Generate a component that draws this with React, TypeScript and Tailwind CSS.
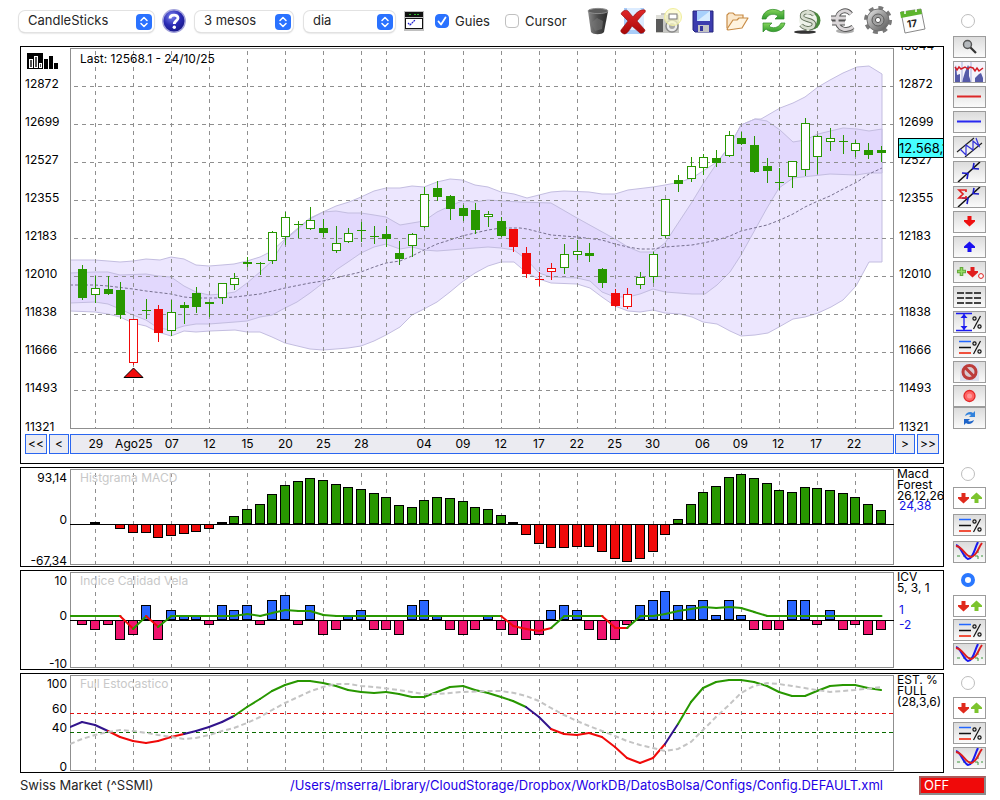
import { useState } from "react";
import type { ReactNode } from "react";

const COUNT = 64;
const X = (i: number) => Math.round(82.25 + i * 12.675);
const GRID = [1, 4, 7, 10, 13, 16, 19, 22, 24, 27, 30, 33, 36, 39, 42, 45, 46, 49, 52, 55, 58, 61];
const DATES: [number, string][] = [
  [1, "29"], [4, "Ago25"], [7, "07"], [10, "12"], [13, "15"], [16, "20"], [19, "25"], [22, "28"],
  [27, "04"], [30, "09"], [33, "12"], [36, "17"], [39, "22"], [42, "25"], [45, "30"], [49, "06"],
  [52, "09"], [55, "12"], [58, "17"], [61, "22"],
];

const GREEN = "#289700";
const RED = "#f00a0a";

// kind: G filled green, g hollow green, R filled red, r hollow red
type Candle = [string, number, number, number, number];
const CANDLES: Candle[] = [
  ["G", 265, 269, 297, 299], ["g", 276, 288, 294, 302], ["G", 276, 289, 293, 294], ["G", 282, 290, 314, 318],
  ["r", 319, 319, 362, 364], ["G", 299, 310, 310, 318], ["R", 305, 309, 332, 341], ["g", 300, 312, 330, 335],
  ["G", 302, 305, 307, 323], ["G", 287, 293, 306, 312], ["G", 302, 302, 303, 316], ["g", 283, 283, 297, 303],
  ["g", 273, 278, 284, 289], ["G", 257, 262, 263, 266], ["G", 262, 263, 263, 274], ["g", 231, 232, 260, 263],
  ["g", 212, 217, 236, 244], ["G", 221, 224, 224, 237], ["g", 207, 220, 228, 229], ["G", 219, 228, 232, 236],
  ["g", 226, 243, 250, 252], ["g", 228, 233, 241, 242], ["G", 222, 230, 230, 241], ["G", 226, 236, 236, 243],
  ["G", 226, 234, 238, 246], ["G", 241, 253, 258, 264], ["g", 233, 234, 245, 256], ["g", 187, 194, 226, 227],
  ["G", 181, 188, 196, 200], ["G", 195, 196, 208, 219], ["G", 205, 208, 215, 220], ["G", 203, 210, 229, 233],
  ["g", 211, 214, 216, 226], ["G", 217, 221, 235, 236], ["R", 229, 229, 246, 251], ["R", 247, 253, 273, 277],
  ["R", 272, 279, 279, 285], ["r", 263, 268, 271, 279], ["g", 244, 254, 267, 273], ["g", 240, 251, 254, 259],
  ["G", 243, 253, 255, 261], ["G", 268, 269, 282, 287], ["R", 289, 293, 305, 306], ["r", 288, 294, 306, 308],
  ["g", 272, 277, 284, 288], ["g", 252, 254, 276, 282], ["g", 199, 199, 235, 237], ["G", 175, 180, 183, 191],
  ["g", 157, 166, 178, 181], ["g", 154, 157, 167, 174], ["G", 150, 158, 162, 166], ["g", 131, 135, 155, 156],
  ["G", 132, 138, 143, 144], ["G", 136, 145, 171, 172], ["G", 158, 166, 170, 182], ["G", 168, 182, 182, 189],
  ["g", 161, 161, 176, 187], ["g", 118, 123, 169, 175], ["g", 135, 136, 156, 173], ["g", 128, 138, 141, 150],
  ["G", 135, 141, 141, 153], ["g", 140, 143, 150, 156], ["G", 143, 150, 154, 158], ["G", 146, 150, 152, 161],
];

const WIDE_UPPER =
  "70,260 95,260 108,261 120,262 133,261 146,259 160,260 171,257 184,259 196,265 209,266 222,265 234,264 247,261 260,257 272,251 285,239 298,228 310,218 323,212 336,206 349,202 361,197 374,191 386,188 400,188 412,186 424,187 437,182 450,179 462,180 475,185 488,187 501,192 514,194 527,198 539,195 551,192 564,191 589,192 602,194 615,194 628,190 653,187 665,185 680,182 692,178 703,171 717,162 729,147 741,125 755,119 761,119 780,108 793,103 805,97 818,87 830,80 843,73 857,67 869,66 882,74";
const WIDE_LOWER =
  "882,262 869,262 856,286 843,300 831,307 818,313 805,317 793,319 779,327 768,333 755,335 741,336 730,331 717,324 703,322 692,317 680,314 665,313 653,310 640,312 628,311 615,306 602,297 590,288 577,284 551,283 539,279 527,273 514,262 501,262 488,266 475,273 462,282 450,292 437,302 424,309 412,315 400,327 386,335 374,341 361,346 348,348 336,349 323,350 310,349 285,343 272,337 260,332 247,332 235,330 210,331 196,332 184,331 171,336 158,332 146,326 133,323 120,317 108,314 95,312 70,311";
const NARROW_UPPER =
  "70,273 95,272 108,272 120,275 146,274 158,276 171,277 184,286 196,292 209,295 222,294 235,292 247,283 260,272 272,261 285,240 298,229 310,219 323,212 336,211 348,213 361,213 374,215 386,217 400,225 412,223 424,221 437,212 450,206 462,201 475,202 488,200 520,202 551,203 577,218 615,239 628,247 640,252 653,252 665,243 692,202 703,184 717,163 729,147 741,125 755,119 767,121 780,130 793,142 805,140 818,134 843,128 857,129 869,131 882,129";
const NARROW_LOWER =
  "882,173 869,173 856,175 830,174 793,178 779,188 767,208 741,255 730,272 717,285 705,294 692,294 665,292 653,289 640,294 628,297 615,297 602,292 590,281 577,278 551,277 539,273 527,260 514,250 501,248 488,247 475,248 462,249 450,250 437,251 424,250 412,247 400,249 386,244 374,247 361,253 348,262 336,270 323,283 310,293 297,302 285,308 272,315 260,317 247,321 235,322 209,324 196,324 184,326 171,330 158,328 146,320 133,315 120,309 108,304 95,302 70,303";
const MIDDLE =
  "70,285 95,285 108,286 133,289 146,291 171,294 184,297 196,298 220,298 235,297 260,294 285,288 310,283 323,281 348,275 361,272 374,267 386,263 400,261 412,256 424,250 437,244 450,240 462,236 475,233 488,230 501,228 520,228 527,229 539,232 551,235 577,237 602,240 615,244 628,247 640,249 653,249 665,247 692,245 703,243 717,240 730,236 741,231 767,225 780,220 793,214 805,207 818,201 830,196 843,189 857,182 869,174 882,168";

// y of each bar end; null where no bar is drawn
const MACD: (number | null)[] = [
  null, 522, null, 528, 532, 532, 537, 535, 533, 531, 528, 522, 516, 509, 504, 494, 485, 481, 478, 480, 484, 487,
  489, 493, 497, 505, 507, 500, 497, 498, 501, 507, 509, 515, 522, 534, 543, 547, 547, 546, 546, 551, 558, 561,
  558, 551, 534, 519, 504, 492, 486, 477, 474, 478, 483, 490, 492, 487, 488, 490, 493, 497, 504, 510,
];

const ICV = [
  -1, -2, -1, -4, -3, 3, -4, 2, 1, 1, -1, 3, 2, 3, -1, 4, 5, -1, 3, -3, -2, 1, 2, -2, -2, -3, 3, 4, 1, -2, -3, -2, 1,
  -2, -3, -4, -3, 2, 3, 2, -2, -4, -4, -1, 3, 4, 6, 3, 3, 4, 1, 4, 1, -2, -2, -2, 4, 4, -1, 2, -2, -1, -3, -2,
];

const ICV_SIGNAL: Record<number, number> = {
  4: 629, 6: 627, 13: 614, 15: 613, 16: 610, 17: 611, 18: 611, 19: 615, 34: 626, 35: 629, 36: 631, 37: 628, 42: 628,
  43: 628, 46: 614, 47: 611, 48: 609, 49: 607, 50: 608, 51: 607, 52: 608, 53: 612,
};

// first value sits on the left edge of the plot
const STOCH = [
  727, 722, 725, 731, 737, 741, 743, 741, 737, 734, 731, 727, 722, 716, 707, 699, 691, 685, 681, 681, 683, 686, 690,
  692, 693, 692, 694, 697, 697, 692, 687, 686, 690, 693, 697, 701, 707, 717, 729, 734, 735, 733, 737, 747, 758, 763,
  758, 744, 724, 702, 688, 682, 680, 680, 682, 686, 692, 696, 696, 691, 686, 685, 685, 688, 690,
];
const STOCH_SLOW =
  "70,744 82,739 95,735 108,732 120,730 133,731 147,733 158,735 171,737 184,739 196,738 209,735 222,731 234,728 247,723 260,717 272,710 285,703 298,697 311,691 323,687 336,684 349,684 361,686 374,687 399,690 424,694 437,694 462,692 488,691 501,691 514,693 526,696 539,701 551,708 564,715 577,721 589,726 602,731 615,736 627,741 640,745 653,748 665,751 678,749 691,742 703,730 716,717 729,705 741,693 754,686 767,683 779,684 792,686 817,690 830,692 855,690 882,687";

function VerticalGrid({ top, bottom }: { top: number; bottom: number }) {
  return (
    <g stroke="#8f8f8f" strokeDasharray="4 4" shapeRendering="crispEdges">
      {GRID.map((i) => (
        <line key={i} x1={X(i) + 0.5} x2={X(i) + 0.5} y1={top} y2={bottom} />
      ))}
    </g>
  );
}

function PriceChart() {
  return (
    <svg viewBox="70 47 824 382" preserveAspectRatio="none" className="block h-[382px] w-full" role="img" aria-label="Swiss Market">
      <polygon points={`${WIDE_UPPER} ${WIDE_LOWER}`} fill="#ece6fe" stroke="#c3bde0" />
      <polygon points={`${NARROW_UPPER} ${NARROW_LOWER}`} fill="#d8cafc" fillOpacity="0.5" stroke="#c3bde0" />
      <polyline points={MIDDLE} fill="none" stroke="#77708f" strokeDasharray="3 2" />
      <VerticalGrid top={51} bottom={429} />
      <g stroke="#8f8f8f" strokeDasharray="4 4" shapeRendering="crispEdges">
        {[86, 124, 162, 200, 238, 276, 314, 352, 390].map((y) => (
          <line key={y} x1="74" x2="894" y1={y + 0.5} y2={y + 0.5} />
        ))}
      </g>
      <path d="M70.500 428.500V48.500H893.500V428.500Z" fill="none" stroke="#8f8f8f" shapeRendering="crispEdges" />
      <g shapeRendering="crispEdges">
        {CANDLES.map(([kind, high, top, bottom, low], i) => {
          const color = kind.toLowerCase() === "g" ? GREEN : RED;
          const hollow = kind === "g" || kind === "r";
          return (
            <g key={i}>
              <rect x={X(i)} y={high} width="1" height={low - high + 1} fill={color} />
              {hollow ? (
                <rect x={X(i) - 3.5} y={top + 0.5} width="8" height={bottom - top} fill="#fff" stroke={color} />
              ) : (
                <rect x={X(i) - 4} y={top} width="9" height={bottom - top + 1} fill={color} />
              )}
            </g>
          );
        })}
      </g>
      <path d="M133.500 368L143 377.500H124Z" fill="#f00a0a" stroke="#000" />
    </svg>
  );
}

function MacdChart() {
  return (
    <svg viewBox="70 468 824 98" preserveAspectRatio="none" className="block h-[98px] w-full" role="img" aria-label="MACD">
      <VerticalGrid top={473} bottom={566} />
      <path d="M70.500 564.500V469.500H893.500V564.500Z" fill="none" stroke="#8f8f8f" shapeRendering="crispEdges" />
      <g shapeRendering="crispEdges">
        {MACD.map((y, i) => {
          if (y === null) return null;
          const up = y < 524;
          return (
            <rect
              key={i}
              x={X(i) - 4.5}
              y={up ? y + 0.5 : 524.5}
              width="9"
              height={up ? 523 - y : y - 524}
              fill={up ? GREEN : RED}
              stroke="#000"
            />
          );
        })}
        <rect x="70" y="524" width="824" height="1" />
      </g>
    </svg>
  );
}

function IcvChart() {
  const signal = Array.from({ length: COUNT }, (_, i) => ICV_SIGNAL[i] ?? 616);
  return (
    <svg viewBox="70 571 824 98" preserveAspectRatio="none" className="block h-[98px] w-full" role="img" aria-label="Indice Calidad Vela">
      <VerticalGrid top={576} bottom={669} />
      <path d="M70.500 667.500V572.500H893.500V667.500Z" fill="none" stroke="#8f8f8f" shapeRendering="crispEdges" />
      <g shapeRendering="crispEdges">
        {ICV.map((v, i) => {
          const size = Math.round(Math.abs(v) * 4.9);
          return (
            <rect
              key={i}
              x={X(i) - 4.5}
              y={v > 0 ? 620.5 - size : 620.5}
              width="9"
              height={size - 1}
              fill={v > 0 ? "#2a66ff" : "#f0146e"}
              stroke="#000"
            />
          );
        })}
        <rect x="70" y="620" width="824" height="1" />
      </g>
      <line x1="70" y1="616" x2="82" y2="616" stroke={GREEN} strokeWidth="2" />
      {signal.slice(1).map((y, i) => (
        <line
          key={i}
          x1={X(i)}
          y1={signal[i]}
          x2={X(i + 1) + 0.5}
          y2={y}
          stroke={y >= 626 ? RED : GREEN}
          strokeWidth="2"
          strokeLinecap="round"
        />
      ))}
    </svg>
  );
}

function StochasticChart() {
  const color = (y: number) => (y <= 707 ? GREEN : y >= 732 ? RED : "#32148c");
  return (
    <svg viewBox="70 674 824 98" preserveAspectRatio="none" className="block h-[98px] w-full" role="img" aria-label="Full Estocastico">
      <VerticalGrid top={679} bottom={772} />
      <path d="M70.500 770.500V675.500H893.500V770.500Z" fill="none" stroke="#8f8f8f" shapeRendering="crispEdges" />
      <g strokeDasharray="4 3" shapeRendering="crispEdges">
        <line x1="70" x2="894" y1="713.5" y2="713.5" stroke="#e01010" />
        <line x1="70" x2="894" y1="732.5" y2="732.5" stroke="#0a6a00" />
      </g>
      {STOCH.slice(1).map((y, i) => (
        <line
          key={i}
          x1={i === 0 ? 70 : X(i - 1)}
          y1={STOCH[i]}
          x2={X(i)}
          y2={y}
          stroke={color(y)}
          strokeWidth="2"
          strokeLinecap="round"
        />
      ))}
      <polyline points={STOCH_SLOW} fill="none" stroke="#c4c4c4" strokeWidth="2" strokeDasharray="5 3" />
    </svg>
  );
}

type Tick = [string, number];

function AxisLabels({ ticks, align }: { ticks: Tick[]; align: string }) {
  return (
    <>
      {ticks.map(([text, at]) => (
        <span key={text} style={{ top: at }} className={`absolute -translate-y-1/2 leading-4 ${align}`}>
          {text}
        </span>
      ))}
    </>
  );
}

const PRICES: Tick[] = [
  ["12872", 37], ["12699", 75], ["12527", 113], ["12355", 151], ["12183", 189],
  ["12010", 227], ["11838", 265], ["11666", 303], ["11493", 341], ["11321", 380],
];

function IndicatorPanel({
  title, ticks, lines, values, children,
}: {
  title: string;
  ticks: Tick[];
  lines: string[];
  values: Tick[];
  children: ReactNode;
}) {
  return (
    <section className="flex min-w-0 flex-1 border border-black text-xs text-black">
      <div className="relative w-[49px] shrink-0">
        <AxisLabels ticks={ticks} align="right-[3px]" />
      </div>
      <div className="relative min-w-0 flex-1">
        {children}
        <h2 className="absolute top-0.5 left-2.5 leading-4 text-[#c8c8c8]">{title}</h2>
      </div>
      <div className="relative w-[49px] shrink-0 overflow-hidden pl-[3px] leading-[11px] whitespace-nowrap">
        {lines.map((line) => (
          <p key={line}>{line}</p>
        ))}
        <div className="text-[#1414e6]">
          <AxisLabels ticks={values} align="left-[5px]" />
        </div>
      </div>
    </section>
  );
}

function ToolButton({ label, plain, children }: { label: string; plain?: boolean; children: ReactNode }) {
  return (
    <button
      type="button"
      aria-label={label}
      className={`flex h-[22px] w-[33px] shrink-0 items-center justify-center border border-[#9c9c9c] ${
        plain ? "bg-white" : "bg-linear-to-b from-[#dcdcdc] to-[#fafafa]"
      }`}
    >
      <svg viewBox="0 0 31 20" className="h-5 w-[31px]" aria-hidden="true">
        {children}
      </svg>
    </button>
  );
}

function PercentGlyph() {
  return (
    <g fill="none" stroke="#111" strokeWidth="1.2">
      <path d="M26.500 4L19.500 17" />
      <circle cx="20.500" cy="6.500" r="1.600" />
      <circle cx="25.500" cy="14.500" r="1.600" />
    </g>
  );
}

function LinesPercent() {
  return (
    <>
      <path d="M5 4.500H17" stroke="#2266ff" strokeWidth="1.500" />
      <path d="M5 10.500H17" stroke="#111" strokeWidth="1.500" />
      <path d="M5 16H17" stroke="#f0503c" strokeWidth="2" />
      <PercentGlyph />
    </>
  );
}

const DOWN = "M-2 -5H2V-1H5.500V0.500L0 5.500L-5.500 0.500V-1H-2Z";

function UpDown() {
  return (
    <>
      <path d={DOWN} transform="translate(9.500 10)" fill="#e02a1c" />
      <path d={DOWN} transform="translate(22.500 10) rotate(180)" fill="#7cc42e" />
    </>
  );
}

function Crossing() {
  return (
    <>
      <path d="M3 14H29M24 8V20" stroke="#3c963c" strokeDasharray="3 3" />
      <path d="M2 3C7 4 9 15 14 17C19 17 20 8 24 0" fill="none" stroke="#1a1aee" strokeWidth="2" />
      <path d="M2 4C9 5 11 14 17 15C23 14 24 6 28 1" fill="none" stroke="#dc1e1e" strokeWidth="2" />
    </>
  );
}

function TrendArrows() {
  return (
    <>
      <path d="M4 20L26 0" stroke="#111" strokeWidth="1.500" />
      <path d="M8 11L14 11.500L13 17M25 7L19 6.500L20 1" fill="none" stroke="#1a1ac8" strokeWidth="1.600" />
    </>
  );
}

function MainTools() {
  return (
    <>
      <div className="flex flex-col gap-[3px]">
        <ToolButton label="Zoom">
          <circle cx="13.500" cy="7.500" r="4" fill="#b4b8bc" stroke="#555" strokeWidth="1.400" />
          <path d="M16.500 10.500L22 16" stroke="#333" strokeWidth="2.200" />
        </ToolButton>
        <ToolButton label="Histograma">
          <rect width="31" height="20" fill="#f5f3fa" />
          <path d="M1 20V8L2 3L3 13L6 12V20ZM8 20L11 10L14 3L15 5V14L17 20ZM21 20V16L25 12L27 11L29 16V20Z" fill="#555aa8" />
          <path d="M8 0V20M17 0V20" stroke="#a9b0dc" />
          <path d="M1 5L3 8L5 5L7 7L11 5L14 7L16 5L19 6L21 9L23 6L25 9L29 6" fill="none" stroke="#d41e28" strokeWidth="1.500" />
        </ToolButton>
        <ToolButton label="Linea roja"><path d="M3 9.500H27" stroke="#dc2828" strokeWidth="2" /></ToolButton>
        <ToolButton label="Linea azul"><path d="M3 9.500H27" stroke="#2828f0" strokeWidth="2" /></ToolButton>
        <ToolButton label="Canal">
          <path d="M3 15L20 1M11 20L28 6" stroke="#222" strokeWidth="1.200" />
          <path d="M6 12L12 18L12 8L19 13V4L25 9L22 1" fill="none" stroke="#3232dc" strokeWidth="1.200" />
        </ToolButton>
        <ToolButton label="Tendencia"><TrendArrows /></ToolButton>
        <ToolButton label="Suma tendencia">
          <TrendArrows />
          <path d="M12 5V3H5L9 7L5 11H12V9" fill="none" stroke="#e02020" strokeWidth="1.700" />
        </ToolButton>
        <ToolButton label="Venta"><path d={DOWN} transform="translate(15.500 9)" fill="#ee1010" /></ToolButton>
        <ToolButton label="Compra"><path d={DOWN} transform="translate(15.500 10) rotate(180)" fill="#1a10f0" /></ToolButton>
        <ToolButton label="Operaciones">
          <path d="M7.500 5V14M3 9.500H12" stroke="#64a83c" strokeWidth="3.600" />
          <path d="M7.500 6V13M4 9.500H11" stroke="#96dc64" strokeWidth="1.400" />
          <path d={DOWN} transform="translate(18.500 10)" fill="#e01e1e" />
          <circle cx="27" cy="14" r="2.400" fill="#fff" stroke="#e01e1e" />
        </ToolButton>
        <ToolButton label="Lineas"><path d="M3 6H27M3 11H27M3 16H27" stroke="#444" strokeWidth="2" strokeDasharray="7 1.500" /></ToolButton>
        <ToolButton label="Rango">
          <path d="M2 1.500H18M2 18.500H18M10 2V18" stroke="#1a1af0" strokeWidth="1.300" />
          <path d="M10 2L13.500 6H6.500ZM10 18L13.500 14H6.500Z" fill="#1a1af0" />
          <PercentGlyph />
        </ToolButton>
        <ToolButton label="Niveles"><LinesPercent /></ToolButton>
        <ToolButton label="Bloquear">
          <rect x="6" y="1" width="19" height="18" fill="#dce0ee" />
          <circle cx="15.500" cy="10" r="6.500" fill="#d8c8d0" stroke="#bc3c3c" strokeWidth="3" />
          <path d="M11 5.500L20 14.500" stroke="#bc3c3c" strokeWidth="3" />
        </ToolButton>
      </div>
      <div className="mt-0.5 flex flex-col">
        <ToolButton label="Grabar">
          <circle cx="15.500" cy="10" r="5.500" fill="#ff6464" stroke="#e02828" strokeWidth="1.300" />
          <circle cx="15.500" cy="10" r="2.500" fill="#ff9696" />
        </ToolButton>
        <ToolButton label="Sincronizar">
          <path d="M11 8C12 4 17 3 19 5L21 3V9H15L17 7C15 6 13 7 11 8Z" fill="#3282dc" />
          <path d="M20 12C19 16 14 17 12 15L10 17V11H16L14 13C16 14 18 13 20 12Z" fill="#1e64c8" />
        </ToolButton>
      </div>
    </>
  );
}

function PanelRadio({ label, value, selected, onSelect }: { label: string; value: string; selected: string; onSelect: (v: string) => void }) {
  return (
    <input
      type="radio"
      name="panel"
      aria-label={label}
      value={value}
      checked={selected === value}
      onChange={() => onSelect(value)}
      className="ml-2 h-3.5 w-3.5 shrink-0 appearance-none rounded-full border border-[#bdbdbd] bg-white checked:border-4 checked:border-[#2a78ff]"
    />
  );
}

function IndicatorTools({ spacing, children }: { spacing: string; children: ReactNode }) {
  return (
    <div className="flex w-[33px] shrink-0 flex-col">
      {children}
      <div className={`flex flex-col ${spacing}`}>
        <ToolButton label="Señales" plain><UpDown /></ToolButton>
        <ToolButton label="Niveles"><LinesPercent /></ToolButton>
        <ToolButton label="Cruces"><Crossing /></ToolButton>
      </div>
    </div>
  );
}

function Picker({ label, options, width }: { label: string; options: string[]; width: string }) {
  return (
    <div className={`relative shrink-0 ${width}`}>
      <select
        aria-label={label}
        className="block h-[21px] w-full appearance-none rounded-md bg-white pr-6 pb-0.5 pl-[9px] text-[13px] leading-[19px] text-[#262626] shadow-[0_0_0_1px_#e2e2e2,0_1px_2px_#bbbbbb]"
      >
        {options.map((o) => (
          <option key={o}>{o}</option>
        ))}
      </select>
      <svg viewBox="0 0 16 16" className="pointer-events-none absolute top-[3px] right-0.5 h-4 w-4" aria-hidden="true">
        <rect width="16" height="16" rx="4" fill="#2a72ff" />
        <path d="M5 6.500L8 3.500L11 6.500M5 9.500L8 12.500L11 9.500" fill="none" stroke="#fff" strokeWidth="1.500" strokeLinecap="round" strokeLinejoin="round" />
      </svg>
    </div>
  );
}

function CheckBox({ id, label, initial }: { id: string; label: string; initial: boolean }) {
  const [on, setOn] = useState(initial);
  return (
    <div className="flex shrink-0 items-center gap-1.5">
      <span className="relative flex h-3.5 w-3.5">
        <input
          id={id}
          type="checkbox"
          checked={on}
          onChange={(e) => setOn(e.target.checked)}
          className="h-3.5 w-3.5 appearance-none rounded border border-[#c0c0c0] bg-white checked:border-[#2a72ff] checked:bg-[#2a72ff]"
        />
        {on && (
          <svg viewBox="0 0 14 14" className="pointer-events-none absolute inset-0" aria-hidden="true">
            <path d="M3.500 7.500L6 10.500L10.500 3.500" fill="none" stroke="#fff" strokeWidth="1.800" strokeLinecap="round" strokeLinejoin="round" />
          </svg>
        )}
      </span>
      <label htmlFor={id} className="pt-0.5 text-[13px] text-[#262626]">{label}</label>
    </div>
  );
}

function IconButton({ label, children }: { label: string; children: ReactNode }) {
  return (
    <button type="button" aria-label={label} className="h-[30px] w-[30px] shrink-0">
      <svg viewBox="0 0 30 30" className="h-[30px] w-[30px]" aria-hidden="true">{children}</svg>
    </button>
  );
}

function Gradients() {
  return (
    <defs>
      <linearGradient id="bin" x1="0" x2="1"><stop offset="0" stopColor="#8a8a8a" /><stop offset="0.500" stopColor="#4a4a4a" /><stop offset="1" stopColor="#2a2a2a" /></linearGradient>
      <linearGradient id="metal" x1="0" x2="1" y1="0" y2="1"><stop offset="0" stopColor="#ececec" /><stop offset="0.500" stopColor="#9a9a9a" /><stop offset="1" stopColor="#555" /></linearGradient>
      <linearGradient id="leaf" x1="0" x2="0" y1="0" y2="1"><stop offset="0" stopColor="#86d45c" /><stop offset="1" stopColor="#2f9a2c" /></linearGradient>
      <linearGradient id="cross" x1="0" x2="0" y1="0" y2="1"><stop offset="0" stopColor="#e02828" /><stop offset="1" stopColor="#a80808" /></linearGradient>
      <radialGradient id="orb" cx="0.4" cy="0.3" r="0.8"><stop offset="0" stopColor="#7c84ee" /><stop offset="0.500" stopColor="#2a2ab4" /><stop offset="1" stopColor="#14147c" /></radialGradient>
    </defs>
  );
}

function Toolbar() {
  return (
    <div className="flex min-w-0 flex-1 items-center">
      <Picker label="Tipo de gráfico" options={["CandleSticks", "Barras", "Línea"]} width="w-[135px]" />
      <button type="button" aria-label="Ayuda" className="ml-2 h-6 w-6 shrink-0">
        <svg viewBox="0 0 24 24" className="h-6 w-6" aria-hidden="true">
          <Gradients />
          <circle cx="12" cy="12" r="11.200" fill="url(#orb)" stroke="#a4a4dc" strokeWidth="1.400" />
          <path d="M8 9.500C8 5 16 5 16 9C16 11.500 12.300 11.800 12.300 15" fill="none" stroke="#fff" strokeWidth="2.800" />
          <circle cx="12.300" cy="18.300" r="1.700" fill="#fff" />
        </svg>
      </button>
      <div className="ml-[9px] flex gap-[11px]">
        <Picker label="Periodo" options={["3 mesos", "6 mesos", "1 any"]} width="w-[98px]" />
        <Picker label="Intervalo" options={["dia", "setmana"]} width="w-[91px]" />
      </div>
      <button type="button" aria-label="Panel" className="ml-[9px] h-5 w-5 shrink-0">
        <svg viewBox="0 0 20 20" className="h-5 w-5" aria-hidden="true">
          <rect width="20" height="20" fill="#c0c0c0" />
          <rect x="1" y="1" width="18" height="5" fill="#111" />
          <path d="M5 3.500H8M10 3.500H15" stroke="#2ab42a" strokeDasharray="2 1" />
          <rect x="1.500" y="7.500" width="17" height="10" fill="#fff" stroke="#111" />
          <path d="M4 12L6 14L11 9" fill="none" stroke="#2222d0" strokeWidth="1.200" strokeDasharray="2 0.600" />
        </svg>
      </button>
      <div className="ml-[11px] flex gap-[15px]">
        <CheckBox id="guies" label="Guies" initial />
        <CheckBox id="cursor" label="Cursor" initial={false} />
      </div>
      <div className="ml-auto flex gap-[5px] pr-[25px]">
        <IconButton label="Papelera">
          <path d="M5 5L8 26C10 29 19 29 21 26L25 5Z" fill="url(#bin)" />
          <ellipse cx="15" cy="5" rx="10" ry="2.600" fill="#5c5c5c" stroke="#8c8c8c" />
          <path d="M8 17L14 12L20 15L19 23L12 25Z" fill="#767676" opacity="0.6" />
        </IconButton>
        <IconButton label="Borrar">
          <path d="M6 2H26V28H6Z" fill="#a8ccf8" />
          <path d="M9 2H22L26 7V24H9Z" fill="#dcecff" />
          <path d="M3 8C4 5 8 3 10 5L15 11C18 7 22 3 27 4C28 5 27 7 25 8L19 15L27 24C27 26 24 28 22 27L14 20C12 23 10 27 7 28C5 28 2 26 3 24L10 15Z" fill="url(#cross)" stroke="#8c0808" strokeWidth="0.600" />
        </IconButton>
        <IconButton label="Captura">
          <path d="M3 9H8V7H13V9H26V27H3Z" fill="#c8c8c4" />
          <path d="M3 13H10V26H3Z" fill="#5a5a5a" />
          <path d="M3 9H13V13H3Z" fill="#deded8" />
          <circle cx="19" cy="20" r="6" fill="#ececec" stroke="#8a8a8a" strokeWidth="1.500" />
          <circle cx="19" cy="20" r="3" fill="#a8a8a8" />
          <circle cx="20" cy="11" r="8.500" fill="#fbfac8" fillOpacity="0.7" stroke="#f0ee9c" />
          <rect x="16" y="8" width="8" height="5" fill="#fff" stroke="#777" />
        </IconButton>
        <IconButton label="Guardar">
          <path d="M5 5H25V26H7L5 24Z" fill="#3c3cae" stroke="#24247c" />
          <path d="M9 5H22V15H9Z" fill="#a8d0fc" />
          <path d="M9 15L22 5V15Z" fill="#d8ecff" />
          <path d="M10 19H21V26H10Z" fill="#c4c4c4" />
          <rect x="12" y="20" width="3" height="5" fill="#34349c" />
        </IconButton>
        <IconButton label="Abrir">
          <path d="M4 22V9L6 7H10L12 9H20V13" fill="#fbe8cc" stroke="#c88c46" strokeWidth="1.200" />
          <path d="M4 23L10 14H14L16 12H25L19 22L5 24Z" fill="#fff4e0" stroke="#c88c46" strokeWidth="1.200" strokeLinejoin="round" />
        </IconButton>
        <IconButton label="Actualizar">
          <path d="M4 13C5 3 17 1 23 6L26 4V13H17L20 10C16 7 10 8 8 13Z" fill="url(#leaf)" stroke="#2c8a28" strokeWidth="0.700" />
          <path d="M27 17C25 26 13 28 8 23L5 26V17H14L11 20C14 23 21 22 23 17Z" fill="url(#leaf)" stroke="#2c8a28" strokeWidth="0.700" />
        </IconButton>
        <IconButton label="Dólar">
          <ellipse cx="12" cy="26" rx="11" ry="1.800" fill="#333" />
          <circle cx="18" cy="14.500" r="9.500" fill="#4a8a3c" />
          <circle cx="15" cy="14" r="9" fill="#eef2ea" />
          <path d="M21 9C17 4 9 6 9 10C9 15 21 13 21 18C21 23 12 24 8 19M15 4V8M15 21V25" fill="none" stroke="#5c6c54" strokeWidth="4.400" />
          <path d="M21 9C17 4 9 6 9 10C9 15 21 13 21 18C21 23 12 24 8 19M15 4V8M15 21V25" fill="none" stroke="#d8ded0" strokeWidth="2.800" />
        </IconButton>
        <IconButton label="Euro">
          <ellipse cx="17" cy="25" rx="9" ry="2.500" fill="#777" opacity="0.6" />
          <path d="M23 8C18 2 9 5 9 14C9 23 18 26 25 21M3 12H18M4 17H17" fill="none" stroke="#555" strokeWidth="4.800" />
          <path d="M23 8C18 2 9 5 9 14C9 23 18 26 25 21M3 12H18M4 17H17" fill="none" stroke="#dad6d8" strokeWidth="3" />
        </IconButton>
        <IconButton label="Ajustes">
          <circle cx="15" cy="14" r="11.500" fill="none" stroke="#787878" strokeWidth="5" strokeDasharray="4.500 4.530" />
          <circle cx="15" cy="14" r="11" fill="url(#metal)" stroke="#707070" />
          <circle cx="15" cy="14" r="6" fill="#a0a0a0" stroke="#5c5c5c" />
          <circle cx="15" cy="14" r="2.600" fill="#fff" stroke="#555" />
        </IconButton>
        <IconButton label="Calendario">
          <path d="M3 6L23 3L27 23L7 27Z" fill="#fdfdfd" stroke="#8a8a8a" />
          <path d="M2 6L23 3L24 8L3 12Z" fill="#5cb42c" />
          <path d="M7 4V8M18 2V6" stroke="#fff" strokeWidth="1.500" />
          <text x="9" y="21" fontFamily="Inter, sans-serif" fontWeight="700" fontSize="10" fill="#222" transform="rotate(-7 15 17)">17</text>
        </IconButton>
      </div>
    </div>
  );
}

function StepButton({ text, label, width }: { text: string; label: string; width: string }) {
  return (
    <button type="button" aria-label={label} className={`h-5 shrink-0 border border-[#2a66f0] bg-[#ebebf1] text-center leading-[18px] ${width}`}>
      {text}
    </button>
  );
}

export default function App() {
  const [panel, setPanel] = useState("icv");
  const radio = (value: string, label: string) => (
    <PanelRadio label={label} value={value} selected={panel} onSelect={setPanel} />
  );
  return (
    <main className="min-h-screen bg-white pr-[14px] font-['Inter','Liberation_Sans',sans-serif] text-black">
      <header className="flex h-9 items-center pt-1.5 pl-[19px]">
        <Toolbar />
        <div className="flex w-[33px] shrink-0">{radio("price", "Precio")}</div>
      </header>

      <div className="flex flex-col gap-[3px] pl-5">
        <div className="flex gap-[9px]">
          <section className="mt-2.5 flex min-w-0 flex-1 flex-col border border-black pb-[9px] text-xs">
            <div className="flex">
              <div className="relative w-[49px] shrink-0">
                <svg viewBox="0 0 32 16" className="mt-[6px] ml-1.5 h-4 w-8" shapeRendering="crispEdges" aria-hidden="true">
                  <rect width="16" height="16" />
                  <path d="M2 6H5V14H2ZM7 3H10V14H7ZM12 10H14V14H12Z" fill="#555" stroke="#fff" strokeWidth="1" />
                  <path d="M17 6H21V16H17ZM22 3H26V16H22ZM27 10H31V16H27Z" />
                </svg>
                <AxisLabels ticks={PRICES} align="left-1" />
              </div>
              <div className="relative min-w-0 flex-1">
                <PriceChart />
                <p className="absolute top-1 left-2.5 leading-4">Last: 12568.1 - 24/10/25</p>
              </div>
              <div className="relative -mb-2 w-[49px] shrink-0 overflow-hidden">
                <AxisLabels ticks={[["13044", -1], ...PRICES]} align="left-[5px]" />
                <output className="absolute top-[91px] left-1 h-5 w-14 border border-black bg-[#46ffff] text-[13px] leading-[18px]">
                  12.568,1
                </output>
              </div>
            </div>
            <nav className="mt-[5px] flex" aria-label="Fechas">
              <div className="flex w-[49px] shrink-0 gap-0.5 pl-1">
                <StepButton text="<<" label="Primera" width="w-[22px]" />
                <StepButton text="<" label="Anterior" width="w-5" />
              </div>
              <div className="relative h-5 min-w-0 flex-1 border border-[#2a66f0] bg-[#ebebf1] leading-[18px]">
                {DATES.map(([i, text]) => (
                  <span key={i} className="absolute -translate-x-1/2" style={{ left: `${((X(i) - 70) / 824) * 100}%` }}>
                    {text}
                  </span>
                ))}
              </div>
              <div className="flex w-[49px] shrink-0 gap-0.5 pl-px">
                <StepButton text=">" label="Siguiente" width="w-5" />
                <StepButton text=">>" label="Última" width="w-[22px]" />
              </div>
            </nav>
          </section>
          <div className="w-[33px] shrink-0">
            <MainTools />
          </div>
        </div>

        <div className="flex gap-[9px]">
          <IndicatorPanel title="Histgrama MACD" ticks={[["93,14", 10], ["0", 52], ["-67,34", 93]]} lines={["Macd", "Forest", "26,12,26"]} values={[["24,38", 38]]}>
            <MacdChart />
          </IndicatorPanel>
          <IndicatorTools spacing="gap-[5px] pt-1.5">{radio("macd", "MACD")}</IndicatorTools>
        </div>
        <div className="flex gap-[9px]">
          <IndicatorPanel title="Indice Calidad Vela" ticks={[["10", 10], ["0", 45], ["-10", 93]]} lines={["ICV", "5, 3, 1"]} values={[["1", 39], ["-2", 54]]}>
            <IcvChart />
          </IndicatorPanel>
          <div className="pt-[3px]">
            <IndicatorTools spacing="gap-0.5 pt-2">{radio("icv", "ICV")}</IndicatorTools>
          </div>
        </div>
        <div className="flex gap-[9px]">
          <IndicatorPanel title="Full Estocastico" ticks={[["100", 10], ["60", 35], ["40", 54], ["0", 93]]} lines={["EST. %", "FULL", "(28,3,6)"]} values={[]}>
            <StochasticChart />
          </IndicatorPanel>
          <div className="pt-[3px]">
            <IndicatorTools spacing="gap-[3px] pt-[7px]">{radio("stochastic", "Estocástico")}</IndicatorTools>
          </div>
        </div>
      </div>

      <footer className="flex h-[25px] items-center pl-5 text-[13px]">
        <span className="text-[#262626]">Swiss Market (^SSMI)</span>
        <a href="#config" className="ml-auto text-[#1e00e6]">
          /Users/mserra/Library/CloudStorage/Dropbox/WorkDB/DatosBolsa/Configs/Config.DEFAULT.xml
        </a>
        <button type="button" className="ml-9 h-[19px] w-[67px] shrink-0 border-2 border-[#8c8c8c] border-t-[#aa5a5a] border-l-[#aa5a5a] bg-[#f00a0a] pl-[3px] text-left leading-[15px] text-white">
          OFF
        </button>
      </footer>
    </main>
  );
}
